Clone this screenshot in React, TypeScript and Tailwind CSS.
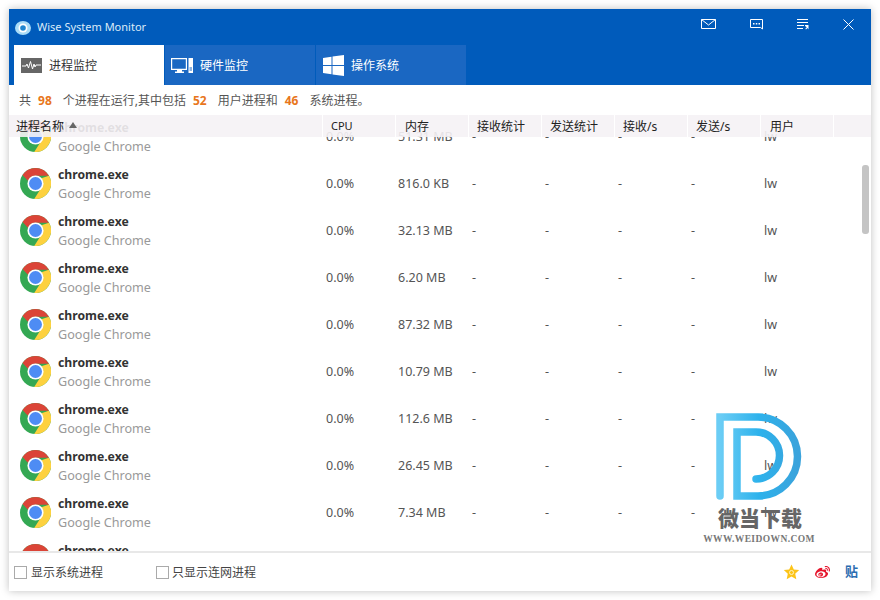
import { FaWeibo } from "react-icons/fa";

const FONT = "font-['Noto_Sans','Noto_Sans_CJK_SC',sans-serif]";

const columns = [
  { label: "CPU", pad: "pl-[8px] text-[11px]" },
  { label: "内存", pad: "pl-[9px]" },
  { label: "接收统计", pad: "pl-[8px]" },
  { label: "发送统计", pad: "pl-[8px]" },
  { label: "接收/s", pad: "pl-[8px]" },
  { label: "发送/s", pad: "pl-[8px]" },
  { label: "用户", pad: "pl-[9px]" },
];

const rows = ["51.31 MB", "816.0 KB", "32.13 MB", "6.20 MB", "87.32 MB", "10.79 MB", "112.6 MB", "26.45 MB", "7.34 MB", "18.02 MB"];

function ChromeIcon() {
  return (
    <svg width="31" height="31" viewBox="0 0 48 48" className="shrink-0">
      <circle cx="24" cy="24" r="24" fill="#34a853" />
      <path d="M24 0A24 24 0 0 1 44.8 12H24a12 12 0 0 0-11.4 8.3L3.9 11A24 24 0 0 1 24 0Z" fill="#db4437" />
      <path d="M44.8 12A24 24 0 0 1 22 47.9L32.8 31A12 12 0 0 0 33 16Z" fill="#fdd13f" />
      <circle cx="24" cy="24" r="12.5" fill="#fff" />
      <circle cx="24" cy="24" r="10" fill="#4e8cf4" />
    </svg>
  );
}

function WaveIcon() {
  return (
    <svg width="21" height="15" viewBox="0 0 21 15">
      <rect width="21" height="15" fill="#666" />
      <path d="M1 8h4l1-2 1.500 4L9.500 3.500 11.500 11l1.500-5 1 3 1-2h5" fill="none" stroke="#fff" strokeWidth="1" />
    </svg>
  );
}

function MonitorIcon() {
  return (
    <svg width="23" height="15" viewBox="0 0 23 15" fill="#fff">
      <path d="M0 0h16v12h-5v1.500h2V15H4v-1.500h2V12H0Zm1.200 1.200v9.600h13.600V1.200Z" fillRule="evenodd" />
      <path d="M17.500 0H22v15h-4.500Zm1 9.500v1H21v-1Zm0 2v1H21v-1Z" fillRule="evenodd" />
    </svg>
  );
}

function WindowsIcon() {
  return (
    <svg width="21" height="21" viewBox="0 0 21 21" fill="#fff">
      <path d="M0 3 8.500 1.700V10H0ZM9.500 1.600 21 0v10H9.500ZM0 11h8.500v8.300L0 18ZM9.500 11H21v10L9.500 19.400Z" />
    </svg>
  );
}

function Tab({ label, active, icon }: { label: string; active?: boolean; icon: React.ReactNode }) {
  return (
    <div className={`flex h-[40px] w-[150px] items-center gap-[6px] pl-[6px] text-[12px] ${active ? "bg-white text-[#333]" : "bg-[#1a67c2] text-white"}`}>
      <span className="flex w-[23px] justify-center">{icon}</span>
      <span className="pt-[1px]">{label}</span>
    </div>
  );
}

function Row({ memory }: { memory: string }) {
  return (
    <div className="flex h-[47px] shrink-0 items-center text-[12.5px] text-[#555]">
      <div className="flex w-[314px] items-center gap-[7px] pl-[11px]">
        <ChromeIcon />
        <div className="flex flex-col">
          <span className="text-[12.2px] leading-[19px] font-bold text-[#333]">chrome.exe</span>
          <span className="text-[12.6px] leading-[19px] text-[#999]">Google Chrome</span>
        </div>
      </div>
      <div className="w-[72px] pt-[2px] pl-[3px]">0.0%</div>
      <div className="w-[73px] pt-[2px] pl-[3px]">{memory}</div>
      <div className="w-[73px] pt-[2px] pl-[4px]">-</div>
      <div className="w-[73px] pt-[2px] pl-[4px]">-</div>
      <div className="w-[73px] pt-[2px] pl-[4px]">-</div>
      <div className="w-[73px] pt-[2px] pl-[4px]">-</div>
      <div className="w-[73px] pt-[2px] pl-[4px]">lw</div>
    </div>
  );
}

export default function App() {
  return (
    <div className={`h-[600px] w-[880px] bg-white p-[9px] ${FONT}`}>
      <div className="relative flex h-[582px] w-[862px] flex-col bg-white shadow-[0_0_8px_rgba(0,0,0,0.25)]">
        <div className="h-[76px] bg-[#005bbb]">
          <div className="flex h-[36px] items-center pt-[1px] pl-[6px]">
            <svg width="16" height="16" viewBox="0 0 16 16">
              <ellipse cx="8" cy="8" rx="8" ry="7" fill="#a9dcf7" />
              <circle cx="8" cy="8" r="4.500" fill="#fff" />
              <circle cx="8" cy="8" r="2.800" fill="#1f86d0" />
            </svg>
            <span className="ml-[6px] text-[11px] text-[#dcebf8]">Wise System Monitor</span>
            <div className="mb-[7px] ml-auto flex items-center gap-[34px] pr-[17px] text-white">
              <svg width="15" height="10" viewBox="0 0 15 10" fill="none" stroke="currentColor">
                <path d="M.5.5h14v9H.5ZM.5.5l7 5.500 7-5.500" />
              </svg>
              <svg width="13" height="11" viewBox="0 0 13 11" fill="currentColor">
                <path d="M.5.5h12V10l-2-1.500H.5Z" fill="none" stroke="currentColor" />
                <path d="M3 4h1.500v1.500H3ZM5.800 4h1.500v1.500H5.800ZM8.500 4H10v1.500H8.500Z" />
              </svg>
              <svg width="12" height="11" viewBox="0 0 12 11" fill="currentColor">
                <path d="M0 0h11v1H0ZM0 3h11v1H0ZM0 6h7v1H0ZM0 9h6v1H0ZM8 6h3.500v4.500L10.500 9 9 10.500 8.300 9.700 9.800 8.300 8 7Z" />
              </svg>
              <svg width="11" height="11" viewBox="0 0 11 11" fill="none" stroke="currentColor">
                <path d="M.5.5l10 10M10.500.5l-10 10" />
              </svg>
            </div>
          </div>
          <div className="flex gap-[1px] pl-[5px]">
            <Tab label="进程监控" active icon={<WaveIcon />} />
            <Tab label="硬件监控" icon={<MonitorIcon />} />
            <Tab label="操作系统" icon={<WindowsIcon />} />
          </div>
        </div>

        <div className="flex h-[30px] items-center pt-[1px] pl-[10px] text-[12px] text-[#555]">
          <span>共</span>
          <span className="ml-[7px] font-bold text-[#e8761c]">98</span>
          <span className="ml-[11px]">个进程在运行,其中包括</span>
          <span className="ml-[7px] font-bold text-[#e8761c]">52</span>
          <span className="ml-[11px]">用户进程和</span>
          <span className="ml-[7px] font-bold text-[#e8761c]">46</span>
          <span className="ml-[11px]">系统进程。</span>
        </div>

        <div className="relative min-h-0 flex-1 overflow-hidden">
          <div className="mt-[-2px] flex flex-col">
            {rows.map((memory, i) => (
              <Row key={i} memory={memory} />
            ))}
          </div>

          <div className="absolute top-0 left-0 flex h-[22px] w-full gap-[1px] text-[12px] text-[#222]">
            <div className="flex w-[313px] items-center bg-[#f5f2f5]/90 pl-[7px]">
              <span className="pt-[1px]">进程名称</span>
              <svg width="8" height="6" viewBox="0 0 8 6" className="mb-[2px] ml-[5px]" fill="#666">
                <path d="M4 0l4 6H0Z" />
              </svg>
            </div>
            {columns.map((c) => (
              <div key={c.label} className={`flex w-[72px] items-center bg-[#f5f2f5]/90 pt-[1px] ${c.pad}`}>
                {c.label}
              </div>
            ))}
            <div className="flex-1 bg-[#f5f2f5]/90" />
          </div>

          <div className="absolute top-[50px] right-[2px] h-[69px] w-[7px] rounded-[3px] bg-[#c4c4c4]" />

          <div className="absolute top-[298px] left-[694px] flex w-[112px] flex-col items-center">
            <svg width="86" height="87" viewBox="0 0 86 87" fill="none" strokeWidth="7.500" strokeLinecap="round">
              <defs>
                <linearGradient id="wd" x1="0" x2="1" y1="0" y2="0">
                  <stop offset="0" stopColor="#6bcdf5" />
                  <stop offset="0.5" stopColor="#2db2ec" />
                  <stop offset="1" stopColor="#3aa3dc" />
                </linearGradient>
              </defs>
              <path d="M4 83V4H42A39.500 39.500 0 0 1 42 83H21V19H40A23.500 23.500 0 0 1 40 66" stroke="url(#wd)" />
            </svg>
            <span className="mt-[6px] ml-[2px] text-[21px] leading-[24px] font-black text-[#666]">微当下载</span>
            <span className="mt-[3px] font-['Liberation_Serif',serif] text-[9.5px] leading-[12px] font-bold tracking-[0.4px] whitespace-nowrap text-[#777]">WWW.WEIDOWN.COM</span>
          </div>
        </div>

        <div className="flex h-[40px] items-center border-t-2 border-[#e8e8e8] pl-[5px] text-[12px] text-[#444]">
          <span className="h-[13px] w-[13px] border border-[#aaa]" />
          <span className="ml-[4px] pt-[1px]">显示系统进程</span>
          <span className="ml-[53px] h-[13px] w-[13px] border border-[#aaa]" />
          <span className="ml-[3px] pt-[1px]">只显示连网进程</span>
          <div className="ml-auto flex items-center gap-[14px] pr-[13px]">
            <svg width="17" height="16" viewBox="0 0 16 16">
              <path d="M8 .5l2.300 5 5.400.6-4 3.700 1.100 5.400L8 12.500l-4.800 2.700 1.100-5.400-4-3.700 5.400-.6Z" fill="#fcc419" />
              <circle cx="8" cy="8.500" r="2" fill="none" stroke="#fff3bf" />
            </svg>
            <FaWeibo className="h-[15px] w-[17px] text-[#e6162d]" />
            <span className="text-[13px] font-semibold text-[#2b6cb0]">贴</span>
          </div>
        </div>
      </div>
    </div>
  );
}
